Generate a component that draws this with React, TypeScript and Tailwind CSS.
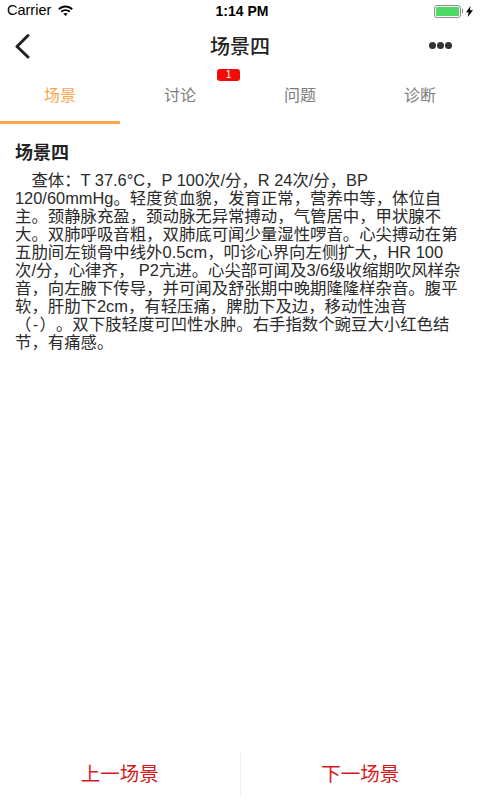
import React from 'react';

const font = { fontFamily: '"Liberation Sans", "Noto Sans CJK SC", sans-serif' };

const tabs = ['场景', '讨论', '问题', '诊断'];

const lines = [
  '\u3000查体：T 37.6°C，P 100次/分，R 24次/分，BP',
  '120/60mmHg。轻度贫血貌，发育正常，营养中等，体位自',
  '主。颈静脉充盈，颈动脉无异常搏动，气管居中，甲状腺不',
  '大。双肺呼吸音粗，双肺底可闻少量湿性啰音。心尖搏动在第',
  '五肋间左锁骨中线外0.5cm，叩诊心界向左侧扩大，HR 100',
  '次/分，心律齐， P2亢进。心尖部可闻及3/6级收缩期吹风样杂',
  '音，向左腋下传导，并可闻及舒张期中晚期隆隆样杂音。腹平',
  '软，肝肋下2cm，有轻压痛，脾肋下及边，移动性浊音',
  '（\u200A-\u200A）。双下肢轻度可凹性水肿。右手指数个豌豆大小红色结',
  '节，有痛感。',
];

const StatusBar: React.FC = () => (
  <div className="h-[20px] pt-[2px] flex items-center justify-between pl-[7px] pr-[6px] text-[14.500px] text-black">
    <div className="flex items-center gap-[6px] flex-1">
      <span>Carrier</span>
      <svg width="17" height="12" viewBox="0 0 17 12" fill="black">
        <path d="M8.5 2.6c2.3 0 4.4.9 6 2.4l1.3-1.4C13.9 1.7 11.3.6 8.5.6S3.1 1.7 1.2 3.6L2.5 5c1.6-1.5 3.7-2.4 6-2.4z" />
        <path d="M8.5 6.1c1.3 0 2.5.5 3.5 1.4l1.3-1.4c-1.3-1.2-3-1.9-4.8-1.9s-3.5.7-4.8 1.9L5 7.5c1-.9 2.2-1.4 3.5-1.4z" />
        <path d="M8.5 8c-.8 0-1.5.3-2.1.8l2.1 2.3 2.1-2.3C10 8.300 9.300 8 8.500 8z" />
      </svg>
    </div>
    <span className="font-bold text-[14px] pl-[3px]">1:14 PM</span>
    <div className="flex-1 flex justify-end items-center gap-[3px]">
      <div className="w-[27px] h-[13px] border border-[#8e8e8e] rounded-[3px] p-[1px]">
        <div className="w-full h-full bg-[#4cd964] rounded-[1px]" />
      </div>
      <div className="w-[1px] h-[4px] bg-[#8e8e8e] -ml-[2px]" />
      <svg width="7" height="11" viewBox="0 0 7 11" fill="black" className="mr-[1px]">
        <path d="M4.500 0 0 6.200h2.600L1.800 11 7 4.300H4z" />
      </svg>
    </div>
  </div>
);

const App: React.FC = () => {
  return (
    <div className="w-[480px] h-[800px] bg-white flex flex-col overflow-hidden [text-spacing-trim:space-all]" style={font}>
      <StatusBar />
      <div className="h-[52px] flex items-center pl-[14px] pr-[28px]">
        <div className="flex-1">
          <svg width="18" height="26" viewBox="0 0 18 26" fill="none" stroke="#222" strokeWidth="3" strokeLinecap="round" strokeLinejoin="round">
            <path d="M14 2.500 3 13.500 14 24" />
          </svg>
        </div>
        <span className="text-[20px] font-medium text-[#222] pt-[1px] pl-[14px]">场景四</span>
        <div className="flex-1 flex justify-end gap-[1px] pb-[2px]">
          <div className="w-[7px] h-[7px] rounded-full bg-[#333]" />
          <div className="w-[7px] h-[7px] rounded-full bg-[#333]" />
          <div className="w-[7px] h-[7px] rounded-full bg-[#333]" />
        </div>
      </div>
      <div className="h-[52px] grid grid-cols-4 relative">
        {tabs.map((tab, i) => (
          <div key={tab} className={`relative flex justify-center pt-[12px] text-[16px] ${i === 0 ? 'text-[#fda44e] border-b-[3px] border-[#fda44e]' : 'text-[#7d7d7d]'}`}>
            {tab}
            {i === 1 && (
              <span className="absolute left-[97px] top-[-3px] w-[23px] h-[12px] rounded-[3px] bg-[#f50a0a] text-white text-[10px] leading-[12px] text-center">1</span>
            )}
          </div>
        ))}
      </div>
      <div className="flex-1 px-[15px] pt-[18px]">
        <h1 className="text-[18px] leading-[22px] font-bold text-[#222] mb-[7px]">场景四</h1>
        <p className="text-[16.400px] leading-[18px] text-[#2a2a2a] whitespace-nowrap">
          {lines.map((line) => (
            <span key={line} className="block">{line}</span>
          ))}
        </p>
      </div>
      <div className="h-[44px] mb-[4px] flex items-center text-[19.500px] text-[#d4181c]">
        <div className="flex-1 text-center pt-[1px]">上一场景</div>
        <div className="w-[1px] h-[44px] bg-[#eef3f5]" />
        <div className="flex-1 text-center pt-[1px]">下一场景</div>
      </div>
    </div>
  );
};

export default App;
